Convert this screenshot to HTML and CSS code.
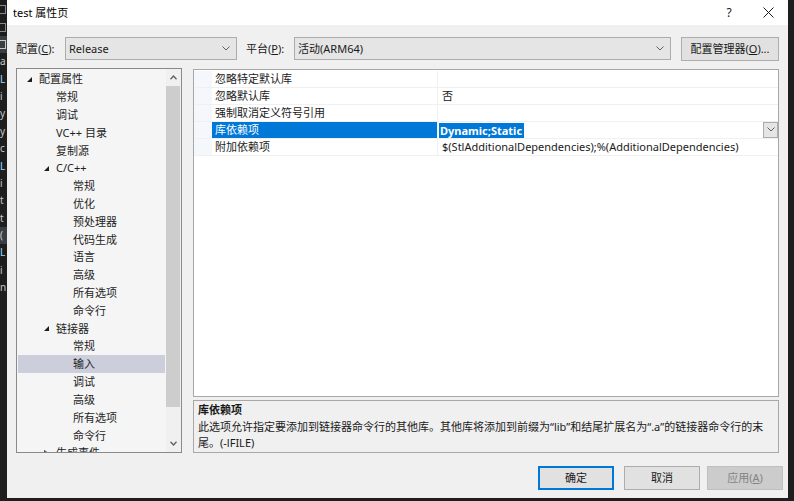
FILE: index.html
```html
<!DOCTYPE html>
<html lang="zh-CN">
<head>
<meta charset="utf-8">
<title>test 属性页</title>
<link rel="stylesheet" href="styles.css">
</head>
<body>
<div class="screen">
  <div class="ide ide-left">
    <div class="ide-line ide-icon"><span class="ide-box"></span></div>
    <div class="ide-line ide-icon"><span class="ide-box"></span></div>
    <div class="ide-line ide-sel"><span class="ide-box light"></span></div>
    <div class="ide-line">a</div>
    <div class="ide-line blue">L</div>
    <div class="ide-line">i</div>
    <div class="ide-line">y</div>
    <div class="ide-line">y</div>
    <div class="ide-line">c</div>
    <div class="ide-line blue">L</div>
    <div class="ide-line">i</div>
    <div class="ide-line">t</div>
    <div class="ide-line">t</div>
    <div class="ide-line ide-sel">(</div>
    <div class="ide-line blue">L</div>
    <div class="ide-line">i</div>
    <div class="ide-line">n</div>
  </div>

  <div class="dialog">
    <div class="titlebar">
      <span class="title">test 属性页</span>
      <span class="tb-btn help">?</span>
      <span class="tb-btn close">
        <svg width="11" height="11" viewBox="0 0 11 11"><path d="M0.5 0.5 L10.5 10.5 M10.5 0.5 L0.5 10.5" stroke="#1a1a1a" stroke-width="1" fill="none"/></svg>
      </span>
    </div>

    <div class="config-row">
      <span class="lbl lbl-config">配置(<u>C</u>):</span>
      <div class="combo combo-config"><span>Release</span><svg class="chev" width="8" height="5" viewBox="0 0 8 5"><path d="M0.5 0.5 L4 4 L7.5 0.5" stroke="#606060" fill="none"/></svg></div>
      <span class="lbl lbl-platform">平台(<u>P</u>):</span>
      <div class="combo combo-platform"><span>活动(ARM64)</span><svg class="chev" width="8" height="5" viewBox="0 0 8 5"><path d="M0.5 0.5 L4 4 L7.5 0.5" stroke="#606060" fill="none"/></svg></div>
      <button class="btn btn-manager">配置管理器(<u>O</u>)...</button>
    </div>

    <div class="main">
      <div class="tree">
        <div class="tree-list">
          <div class="node l0"><span class="twisty"><svg width="5" height="5" viewBox="0 0 5 5"><polygon points="5,0 5,5 0,5" fill="#1e1e1e"/></svg></span><span>配置属性</span></div>
          <div class="node l1"><span class="twisty"></span><span>常规</span></div>
          <div class="node l1"><span class="twisty"></span><span>调试</span></div>
          <div class="node l1"><span class="twisty"></span><span>VC++ 目录</span></div>
          <div class="node l1"><span class="twisty"></span><span>复制源</span></div>
          <div class="node l1"><span class="twisty"><svg width="5" height="5" viewBox="0 0 5 5"><polygon points="5,0 5,5 0,5" fill="#1e1e1e"/></svg></span><span>C/C++</span></div>
          <div class="node l2"><span class="twisty"></span><span>常规</span></div>
          <div class="node l2"><span class="twisty"></span><span>优化</span></div>
          <div class="node l2"><span class="twisty"></span><span>预处理器</span></div>
          <div class="node l2"><span class="twisty"></span><span>代码生成</span></div>
          <div class="node l2"><span class="twisty"></span><span>语言</span></div>
          <div class="node l2"><span class="twisty"></span><span>高级</span></div>
          <div class="node l2"><span class="twisty"></span><span>所有选项</span></div>
          <div class="node l2"><span class="twisty"></span><span>命令行</span></div>
          <div class="node l1"><span class="twisty"><svg width="5" height="5" viewBox="0 0 5 5"><polygon points="5,0 5,5 0,5" fill="#1e1e1e"/></svg></span><span>链接器</span></div>
          <div class="node l2"><span class="twisty"></span><span>常规</span></div>
          <div class="node l2 selected"><span class="twisty"></span><span>输入</span></div>
          <div class="node l2"><span class="twisty"></span><span>调试</span></div>
          <div class="node l2"><span class="twisty"></span><span>高级</span></div>
          <div class="node l2"><span class="twisty"></span><span>所有选项</span></div>
          <div class="node l2"><span class="twisty"></span><span>命令行</span></div>
          <div class="node l1"><span class="twisty"><svg width="5" height="7" viewBox="0 0 5 7"><polygon points="0.5,0.5 4.5,3.5 0.5,6.5" fill="none" stroke="#444"/></svg></span><span>生成事件</span></div>
        </div>
        <div class="scrollbar">
          <div class="sb-arrow"><svg width="7" height="5" viewBox="0 0 7 5"><path d="M0.5 4.2 L3.5 1 L6.5 4.2" stroke="#606060" stroke-width="1.3" fill="none"/></svg></div>
          <div class="sb-track"><div class="sb-thumb"></div></div>
          <div class="sb-arrow"><svg width="7" height="5" viewBox="0 0 7 5"><path d="M0.5 0.8 L3.5 4 L6.5 0.8" stroke="#606060" stroke-width="1.3" fill="none"/></svg></div>
        </div>
      </div>

      <div class="right">
        <div class="grid">
          <div class="prow"><span class="gut"></span><span class="pname">忽略特定默认库</span><span class="pval"></span></div>
          <div class="prow"><span class="gut"></span><span class="pname">忽略默认库</span><span class="pval">否</span></div>
          <div class="prow"><span class="gut"></span><span class="pname">强制取消定义符号引用</span><span class="pval"></span></div>
          <div class="prow active"><span class="gut"></span><span class="pname">库依赖项</span><span class="pval"><span class="edit-sel">Dynamic;Static</span><span class="dd"><svg width="8" height="5" viewBox="0 0 8 5"><path d="M0.5 0.5 L4 4 L7.5 0.5" stroke="#606060" fill="none"/></svg></span></span></div>
          <div class="prow"><span class="gut"></span><span class="pname">附加依赖项</span><span class="pval">$(StlAdditionalDependencies);%(AdditionalDependencies)</span></div>
        </div>
        <div class="desc">
          <div class="desc-title">库依赖项</div>
          <div class="desc-text">此选项允许指定要添加到链接器命令行的其他库。其他库将添加到前缀为“lib”和结尾扩展名为“.a”的链接器命令行的末尾。(-lFILE)</div>
        </div>
      </div>
    </div>

    <div class="buttons">
      <button class="btn dlg-btn default">确定</button>
      <button class="btn dlg-btn cancel">取消</button>
      <button class="btn dlg-btn disabled">应用(<u>A</u>)</button>
    </div>
  </div>

  <div class="ide ide-right"></div>
</div>
</body>
</html>
```

FILE: styles.css
```css
* { box-sizing: border-box; margin: 0; padding: 0; }

html, body {
  width: 794px;
  height: 501px;
  overflow: hidden;
}

body {
  background: #1e1e1e;
  font-family: "Noto Sans", "Noto Sans CJK SC", sans-serif;
  font-size: 11px;
  color: #1a1a1a;
}

u { text-decoration: underline; text-underline-offset: 1px; }

.screen {
  display: flex;
  width: 794px;
  height: 501px;
}

/* background IDE slivers */
.ide {
  background: #1e1e1e;
  height: 501px;
  overflow: hidden;
  flex: none;
}
.ide-left {
  width: 7px;
  padding-top: 1px;
  display: flex;
  flex-direction: column;
}
.ide-line {
  height: 17.4px;
  line-height: 17.4px;
  font-size: 10px;
  color: #c8c8c8;
  white-space: nowrap;
  display: flex;
  align-items: center;
}
.ide-line.blue { color: #9cdcfe; }
.ide-line.ide-sel { background: #3a3d41; color: #d0d0d0; }
.ide-box {
  width: 6px;
  height: 9px;
  border: 1px solid #8a8a8a;
  border-left: none;
}
.ide-box.light { border-color: #c8c8c8; }
.ide-right { width: 6px; }

/* dialog */
.dialog {
  width: 781px;
  height: 498px;
  background: #f0f0f0;
  display: flex;
  flex-direction: column;
  flex: none;
}

.titlebar {
  height: 25px;
  background: #ffffff;
  display: flex;
  align-items: center;
  padding-left: 6px;
  padding-right: 10px;
  flex: none;
}
.title {
  font-size: 11px;
  color: #000;
  line-height: 16px;
}
.tb-btn {
  width: 20px;
  height: 20px;
  display: flex;
  align-items: center;
  justify-content: center;
}
.help {
  margin-left: auto;
  font-size: 12px;
  color: #1a1a1a;
}
.close { margin-left: 19px; }

/* config row */
.config-row {
  display: flex;
  align-items: center;
  padding: 12px 0 0 9px;
  height: 36px;
  flex: none;
}
.lbl {
  flex: none;
  white-space: nowrap;
  line-height: 16px;
}
.lbl-config { width: 49px; }
.lbl-platform { width: 48px; margin-left: 9px; }
.combo {
  flex: none;
  height: 23px;
  background: #e5e5e5;
  border: 1px solid #acacac;
  display: flex;
  align-items: center;
  justify-content: space-between;
  padding: 0 6px 0 3px;
  line-height: 16px;
  margin-top: -1px;
}
.combo-config { width: 172px; }
.combo-platform { width: 377px; }
.chev { flex: none; }

.btn {
  font-family: inherit;
  font-size: 11px;
  color: #1a1a1a;
  background: #e1e1e1;
  border: 1px solid #adadad;
  line-height: 16px;
}
.btn-manager {
  width: 98px;
  height: 24px;
  margin-left: 10px;
  flex: none;
}

/* main area */
.main {
  display: flex;
  margin-top: 7px;
  padding-left: 9px;
  height: 385px;
  flex: none;
}

.tree {
  width: 166px;
  height: 385px;
  border: 1px solid #8a8a8a;
  background: #f5f5f5;
  display: flex;
  flex: none;
  overflow: hidden;
}
.tree-list {
  width: 149px;
  padding: 1.4px 1px 0 1px;
  overflow: hidden;
  flex: none;
}
.node {
  height: 17.82px;
  display: flex;
  align-items: center;
  white-space: nowrap;
  line-height: 16px;
  color: #1e1e1e;
}
.node.l0 { padding-left: 9px; }
.node.l1 { padding-left: 26px; }
.node.l2 { padding-left: 43px; }
.twisty {
  width: 12px;
  flex: none;
  display: flex;
  align-items: center;
}
.node.selected { background: #cccedb; }

.scrollbar {
  width: 15px;
  background: #f0f0f0;
  display: flex;
  flex-direction: column;
  flex: none;
}
.sb-arrow {
  height: 17px;
  display: flex;
  align-items: center;
  justify-content: center;
  flex: none;
}
.sb-track {
  flex: 1;
  display: flex;
  flex-direction: column;
}
.sb-thumb {
  height: 321px;
  background: #cdcdcd;
  margin: 0 1px 0 0;
}

.right {
  margin-left: 11px;
  width: 586px;
  display: flex;
  flex-direction: column;
  flex: none;
}

.grid {
  margin-top: 1px;
  height: 328px;
  background: #ffffff;
  border: 1px solid #a8a8a8;
  padding-top: 1px;
}
.prow {
  display: grid;
  grid-template-columns: 18px 225px 1fr;
  height: 17px;
  border-bottom: 1px solid #f0f0f0;
  align-items: stretch;
}
.gut { background: #f4f7fc; }
.pname {
  padding-left: 3px;
  display: flex;
  align-items: center;
  line-height: 16px;
  white-space: nowrap;
}
.pval {
  border-left: 1px solid #f0f0f0;
  padding-left: 4px;
  display: flex;
  align-items: center;
  line-height: 16px;
  white-space: nowrap;
}
.prow.active .pname {
  background: #0078d7;
  color: #ffffff;
}
.prow.active .pval {
  padding-left: 1px;
  justify-content: space-between;
  padding-right: 0;
}
.edit-sel {
  background: #0078d7;
  color: #ffffff;
  font-weight: bold;
  padding: 0 2px 0 1px;
  line-height: 15px;
}
.dd {
  width: 15px;
  height: 16px;
  background: #e5e5e5;
  border: 1px solid #acacac;
  display: flex;
  align-items: center;
  justify-content: center;
  margin-top: -1px;
}

.desc {
  margin-top: 3px;
  height: 53px;
  border: 1px solid #a8a8a8;
  background: #f0f0f0;
  padding: 1px 4px 0 4px;
}
.desc-title {
  font-weight: bold;
  line-height: 16.5px;
}
.desc-text {
  line-height: 16.5px;
}

/* bottom buttons */
.buttons {
  display: flex;
  justify-content: flex-end;
  margin-top: 13px;
  padding-right: 5px;
  flex: none;
}
.dlg-btn {
  width: 76px;
  height: 24px;
  flex: none;
}
.dlg-btn.default { border-color: #0078d7; box-shadow: inset 0 0 0 1px #0078d7; }
.dlg-btn.cancel { margin-left: 10px; }
.dlg-btn.disabled {
  margin-left: 7px;
  background: #cccccc;
  border-color: #bfbfbf;
  color: #838383;
}
```
